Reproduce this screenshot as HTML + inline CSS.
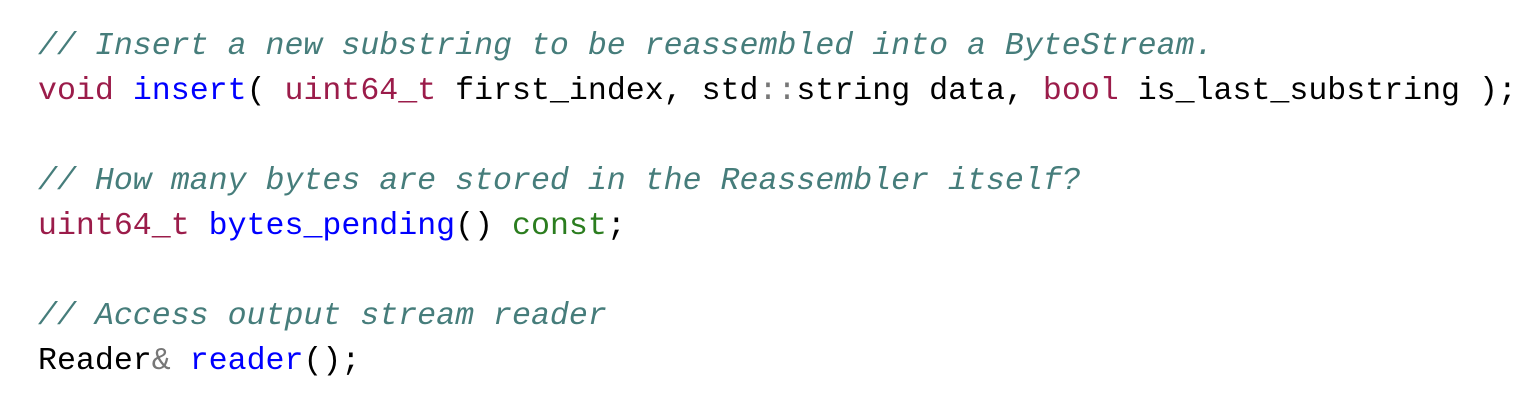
<!DOCTYPE html>
<html><head><meta charset="utf-8"><style>
html,body{margin:0;padding:0;background:#fff;width:1532px;height:406px;overflow:hidden}
pre{margin:0;padding:24px 0 0 38px;font-family:"Liberation Mono",monospace;font-size:31.6px;line-height:45px;color:#000}
.c{color:#467d7b;font-style:italic}
.k{color:#9b1c4a}
.f{color:#0000ff}
.g{color:#2b7d1f}
.o{color:#777}
</style></head><body><pre><span class="c">// Insert a new substring to be reassembled into a ByteStream.</span>
<span class="k">void</span> <span class="f">insert</span>( <span class="k">uint64_t</span> first_index, std<span class="o">::</span>string data, <span class="k">bool</span> is_last_substring );

<span class="c">// How many bytes are stored in the Reassembler itself?</span>
<span class="k">uint64_t</span> <span class="f">bytes_pending</span>() <span class="g">const</span>;

<span class="c">// Access output stream reader</span>
Reader<span class="o">&amp;</span> <span class="f">reader</span>();</pre></body></html>
